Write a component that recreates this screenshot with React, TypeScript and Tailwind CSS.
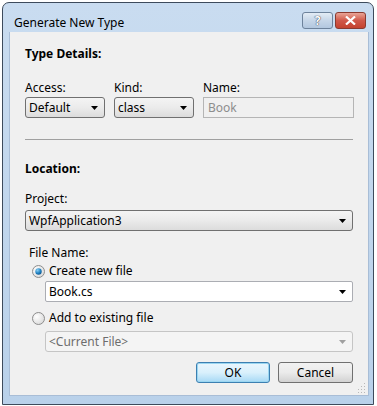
import React from "react";

const font = { fontFamily: '"Segoe UI", "Noto Sans", "Open Sans", sans-serif' };

const Arrow = ({ color = "#000" }: { color?: string }) => (
  <svg width="7" height="4" viewBox="0 0 7 4">
    <path d="M0 0h7L3.5 4z" fill={color} />
  </svg>
);

type ComboProps = {
  value: string;
  width: string;
  variant?: "button" | "edit" | "disabled";
};

const Combo = ({ value, width, variant = "button" }: ComboProps) => {
  const skin =
    variant === "edit"
      ? "bg-white border-[#abadb3] text-black rounded-[2px]"
      : variant === "disabled"
      ? "bg-[#f4f4f4] border-[#c5c5c5] text-[#6d6d6d] rounded-[3px]"
      : "bg-gradient-to-b from-[#f4f4f4] via-[#ebebeb] to-[#dcdcdc] border-[#707070] text-black rounded-[3px]";
  return (
    <div className={`${width} h-[21px] border ${skin} flex items-center justify-between pl-[3px] pr-[6px]`}>
      <span className="text-[12px] leading-[16px]">{value}</span>
      <Arrow color={variant === "disabled" ? "#a0a0a0" : "#000"} />
    </div>
  );
};

const Radio = ({ checked, label }: { checked?: boolean; label: string }) => (
  <div className="flex items-center h-[16px] gap-[4px] ml-[7px]">
    <svg width="13" height="13" viewBox="0 0 13 13">
      <defs>
        <radialGradient id="rb" cx="0.35" cy="0.35" r="0.8">
          <stop offset="0" stopColor="#ffffff" />
          <stop offset="1" stopColor="#d5d5d5" />
        </radialGradient>
        <radialGradient id="dot" cx="0.35" cy="0.3" r="0.8">
          <stop offset="0" stopColor="#8ad0f5" />
          <stop offset="0.6" stopColor="#1d7fc0" />
          <stop offset="1" stopColor="#0d4f86" />
        </radialGradient>
      </defs>
      <circle cx="6.5" cy="6.5" r="6" fill="url(#rb)" stroke="#8d8d8d" />
      {checked && <circle cx="6.5" cy="6.5" r="3.2" fill="url(#dot)" />}
    </svg>
    <span className="text-[12px] leading-[16px]">{label}</span>
  </div>
);

const Label = ({ children, bold }: { children: React.ReactNode; bold?: boolean }) => (
  <div className={`text-[12px] leading-[16px] ${bold ? "font-bold" : ""}`}>{children}</div>
);

export default function App() {
  return (
    <div className="w-[377px] h-[406px] bg-white text-black" style={font}>
      <div className="ml-[2px] mt-[2px] w-[372px] h-[403px] border border-[#3d4b5c] rounded-t-[7px] bg-gradient-to-b from-[#c9dcf0] to-[#b9d1ea] flex flex-col">
        {/* title bar */}
        <div className="h-[29px] flex items-start pl-[11px] pr-[7px]">
          <span className="text-[12px] leading-[16px] mt-[12px] text-black">Generate New Type</span>
          <div className="ml-auto mt-[9px] flex gap-[2px]">
            <div className="w-[31px] h-[17px] rounded-[3px] border border-[#6d829b] bg-gradient-to-b from-[#e3ecf5] via-[#c6d6e8] to-[#b2c7df] flex items-center justify-center">
              <span className="text-[12px] leading-[12px] font-bold text-white" style={{ textShadow: "0 0 1px #334, 0 0 1px #334" }}>?</span>
            </div>
            <div className="w-[31px] h-[17px] rounded-[3px] border border-[#8a3a30] bg-gradient-to-b from-[#e8a497] via-[#d0584a] to-[#c4422f] flex items-center justify-center">
              <svg width="11" height="9" viewBox="0 0 11 9">
                <path d="M1 0.5l9 8M10 0.5l-9 8" stroke="#fff" strokeWidth="2.2" />
              </svg>
            </div>
          </div>
        </div>
        {/* client area */}
        <div className="ml-[6px] mr-[4px] h-[364px] bg-[#f0f0f0] border border-[#a8bdd6] border-t-0 px-[15px] pt-[14px] relative">
          <Label bold>Type Details:</Label>
          <div className="flex mt-[18px] gap-[9px]">
            <div className="flex flex-col gap-[1px] w-[80px]">
              <Label>Access:</Label>
              <Combo value="Default" width="w-[80px]" />
            </div>
            <div className="flex flex-col gap-[1px] w-[80px]">
              <Label>Kind:</Label>
              <Combo value="class" width="w-[80px]" />
            </div>
            <div className="flex flex-col gap-[1px]">
              <Label>Name:</Label>
              <div className="w-[151px] h-[21px] border border-[#b5b5b5] bg-[#f0f0f0] pl-[4px] flex items-center">
                <span className="text-[12px] leading-[16px] text-[#8d8d8d]">Book</span>
              </div>
            </div>
          </div>
          <div className="mt-[21px] h-px bg-[#a0a0a0] w-[328px]" />
          <div className="mt-[21px]">
            <Label bold>Location:</Label>
          </div>
          <div className="mt-[14px]">
            <Label>Project:</Label>
          </div>
          <div className="mt-[3px]">
            <Combo value="WpfApplication3" width="w-[328px]" />
          </div>
          <div className="mt-[14px] ml-[4px]">
            <Label>File Name:</Label>
          </div>
          <div className="mt-[2px]">
            <Radio checked label="Create new file" />
          </div>
          <div className="mt-[2px] ml-[20px]">
            <Combo value="Book.cs" width="w-[308px]" variant="edit" />
          </div>
          <div className="mt-[8px]">
            <Radio label="Add to existing file" />
          </div>
          <div className="mt-[5px] ml-[20px]">
            <Combo value="<Current File>" width="w-[308px]" variant="disabled" />
          </div>
          <div className="mt-[10px] flex justify-end gap-[8px] w-[328px]">
            <div className="w-[74px] h-[21px] rounded-[3px] border border-[#3c7fb1] bg-gradient-to-b from-[#eaf6fd] via-[#d9f0fc] to-[#a7d9f5] shadow-[inset_0_0_0_1px_#9ad6f1] flex items-center justify-center">
              <span className="text-[12px] leading-[16px]">OK</span>
            </div>
            <div className="w-[75px] h-[21px] rounded-[3px] border border-[#707070] bg-gradient-to-b from-[#f2f2f2] via-[#ebebeb] to-[#d2d2d2] flex items-center justify-center">
              <span className="text-[12px] leading-[16px]">Cancel</span>
            </div>
          </div>
          <svg className="absolute right-[2px] bottom-[2px]" width="10" height="10" viewBox="0 0 10 10">
            {[
              [8, 0], [8, 3], [5, 3], [8, 6], [5, 6], [2, 6], [8, 9], [5, 9], [2, 9], [-1, 9],
            ].map(([x, y], i) => (
              <rect key={i} x={x} y={y} width="1" height="1" fill="#b8b8b8" />
            ))}
          </svg>
        </div>
      </div>
    </div>
  );
}
